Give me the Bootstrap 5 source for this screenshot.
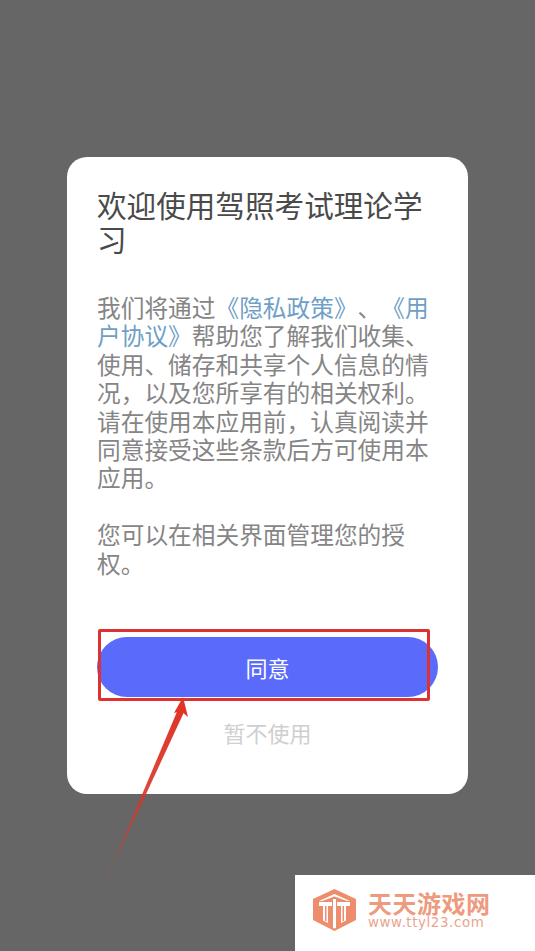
<!DOCTYPE html>
<html lang="zh"><head><meta charset="utf-8">
<link href="https://cdn.jsdelivr.net/npm/bootstrap@5.3.0/dist/css/bootstrap.min.css" rel="stylesheet">
<style>
html,body{height:100%;}
body{background:#666;font-family:"Noto Sans CJK SC","Liberation Sans",sans-serif;overflow:hidden;position:relative;}
.stage{height:951px;padding-top:157px;padding-left:67px;}
.dlg{width:401px;height:637px;border:0;border-radius:20px;padding:31px 30px 0;background:#fff;}
.dlg-title{font-size:29.6px;line-height:34px;color:#4a4a4a;font-weight:400;margin:0 0 37px;}
.dlg-text{font-size:23.7px;line-height:28.4px;color:#858585;font-weight:400;margin:0;width:340px;text-spacing-trim:space-all;}
.dlg-text a{color:#6f9fc6;text-decoration:none;}
.gap-line{height:28.4px;}
.agree{width:341px;height:60px;margin-top:60px;border-radius:30px;background:#5a6bfb;border:0;color:#fff;font-size:22px;font-weight:400;padding:0;}
.later{font-size:22px;color:#cfcfcf;font-weight:400;margin-top:20px;width:341px;line-height:30px;}
.mark-rect{position:absolute;left:98px;top:629px;width:332px;height:72px;border:3px solid #dc3232;border-radius:2px;}
.mark-arrow{position:absolute;left:100px;top:690px;}
.wm{position:absolute;left:295px;top:875px;width:240px;height:76px;background:#fff;padding:0 0 6px 18px;gap:13px;}
.wm-name{font-size:24px;line-height:26px;font-weight:700;color:#ee9a7e;letter-spacing:.5px;white-space:nowrap;margin-left:-1px;}
.wm-url{font-family:"DejaVu Sans",sans-serif;font-size:13.4px;line-height:14px;color:#e9a48d;letter-spacing:.6px;white-space:nowrap;margin-left:-1px;}
</style></head>
<body>
<div class="stage">
  <div class="card dlg">
    <h1 class="dlg-title">欢迎使用驾照考试理论学习</h1>
    <p class="dlg-text">我们将通过<a href="#">《隐私政策》</a>、<a href="#">《用户协议》</a>帮助您了解我们收集、使用、储存和共享个人信息的情况，以及您所享有的相关权利。请在使用本应用前，认真阅读并同意接受这些条款后方可使用本应用。</p>
    <div class="gap-line"></div>
    <p class="dlg-text">您可以在相关界面管理您的授权。</p>
    <button type="button" class="btn agree">同意</button>
    <div class="later text-center">暂不使用</div>
  </div>
</div>
<div class="mark-rect"></div>
<svg class="mark-arrow" width="100" height="200" viewBox="0 0 100 200" aria-hidden="true">
  <defs><linearGradient id="fade" x1="0" y1="1" x2="0" y2="0"><stop offset="0" stop-color="#d8352a" stop-opacity=".1"/><stop offset=".5" stop-color="#d8352a" stop-opacity=".9"/><stop offset="1" stop-color="#e03426"/></linearGradient></defs>
  <polygon points="3,197 79,17 85,20" fill="url(#fade)"/>
  <polygon points="83,7 88,27 81,21 74,23" fill="#e03426"/>
</svg>
<div class="wm d-flex align-items-center">
  <svg width="43" height="42" viewBox="0 0 43 42" aria-hidden="true">
    <path d="M21.5 0 43 10V31L21.5 42 0 31V10Z" fill="#ee8d6e"/>
    <path d="M21.5 5 37 12H34L21.5 7.500 9 12H6Z" fill="#fff"/>
    <path d="M6 13H19V17H15V34L10 31.500V17H6Z M24 13H37V17H33V31.500L28 34V17H24Z" fill="#fff"/>
    <path d="M20 10H23V39L21.500 39.500 20 39Z" fill="#fff"/>
    <path d="M12 17H13.500V32H12Z M29.500 17H31V32H29.500Z" fill="#ee8d6e"/>
  </svg>
  <div>
    <div class="wm-name">天天游戏网</div>
    <div class="wm-url">www.ttyl23.com</div>
  </div>
</div>
</body></html>
